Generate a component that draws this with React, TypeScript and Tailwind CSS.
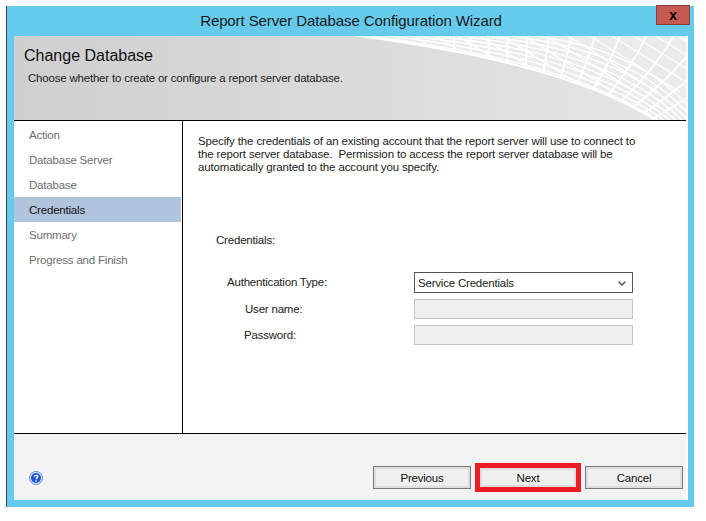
const font = "font-['Liberation_Sans',sans-serif]";
const small = 'text-[11.5px] tracking-[-0.2px]';

const steps = ['Action', 'Database Server', 'Database', 'Credentials', 'Summary', 'Progress and Finish'];

function HeaderMesh() {
  const edge = 'M340 0 C440 14 560 35 640 84 L672 84 L672 0 Z';
  const arcs = [0, 1, 2, 3, 4, 5, 6, 7];
  const spokes = [0, 1, 2, 3, 4, 5, 6, 7, 8, 9, 10, 11, 12, 13];
  return (
    <svg className="absolute inset-0" width="672" height="84" viewBox="0 0 672 84">
      <defs>
        <clipPath id="mesh">
          <path d={edge} />
        </clipPath>
      </defs>
      <path d={edge} fill="#ebebeb" />
      <g clipPath="url(#mesh)" fill="none" stroke="#ffffff" strokeWidth="1.5">
        {arcs.map((i) => (
          <path key={i} d={`M${340 + i * 12} ${-2 - i} C${440 + i * 14} ${11 - i * 2} ${560 + i * 10} ${30 - i * 3} ${644 + i * 6} 84`} />
        ))}
        {spokes.map((i) => {
          const top = 440 + i * (16 + i * 0.6);
          const lean = Math.max(0, top - 500) * 0.45;
          return <path key={i} d={`M${top} -2 Q${top - lean * 0.2} 30 ${top - lean} 84`} strokeWidth="1.8" />;
        })}
        {spokes.map((i) => (
          <path key={`d${i}`} d={`M${400 + i * 22} 0 L${490 + i * 22} 56`} strokeWidth="1.2" />
        ))}
        <path d="M340 0 C440 14 560 35 640 84" strokeWidth="4" />
      </g>
    </svg>
  );
}

function HelpIcon() {
  return (
    <svg width="14" height="14" viewBox="0 0 14 14">
      <circle cx="7" cy="7" r="6.5" fill="#dbe6f8" stroke="#5f8fdc" strokeWidth="1" />
      <circle cx="7" cy="7" r="5" fill="#1f55d0" />
      <path d="M5.2 5.6 C5.4 3.9 8.8 3.9 8.8 5.6 C8.8 6.9 7 6.8 7 8.2" fill="none" stroke="#ffffff" strokeWidth="1.3" />
      <rect x="6.3" y="9.2" width="1.4" height="1.4" fill="#ffffff" />
    </svg>
  );
}

function WizardButton({ label }: { label: string }) {
  return (
    <div className={`flex h-[23px] w-[98px] items-center justify-center border border-[#7a7a7a] bg-[#efefef] pt-[2px] text-[#111] shadow-[inset_0_0_0_2px_#dcdcdc] ${small}`}>
      {label}
    </div>
  );
}

export default function App() {
  return (
    <div className={`h-[521px] w-[706px] overflow-hidden bg-white pl-[6px] pt-[6px] ${font}`}>
      <div className="h-[501px] w-[688px] border-l border-[#444]">
        <div className="flex h-[501px] flex-col bg-[#65caeb] pb-[7px] pl-[7px] pr-[6px]">
          {/* Title bar */}
          <div className="relative flex h-[30px] shrink-0 items-center justify-center text-[15px] tracking-[-0.1px] text-[#1a1a1a]">
            Report Server Database Configuration Wizard
            <div className="absolute right-[-2px] top-[-1px] flex h-[20px] w-[34px] items-center justify-center border border-[#8a4038] bg-[#c65a52] text-sm font-bold text-black">
              x
            </div>
          </div>

          <div className="flex min-h-0 flex-1 flex-col bg-white">
            {/* Header */}
            <div className="relative mr-[2px] h-[85px] shrink-0 overflow-hidden border-b border-black bg-gradient-to-r from-[#cfcfcf] to-[#e6e6e6]">
              <HeaderMesh />
              <div className="relative pl-[10px] pt-[9px] text-base leading-[22px] text-[#111]">Change Database</div>
              <div className={`relative pl-[14px] pt-[3px] text-[#222] ${small}`}>
                Choose whether to create or configure a report server database.
              </div>
            </div>

            {/* Body */}
            <div className="flex min-h-0 flex-1">
              <div className="w-[169px] shrink-0 border-r border-black pt-[1px]">
                {steps.map((step) => (
                  <div
                    key={step}
                    className={`mr-[1px] flex h-[25px] items-center pl-[15px] pt-[2px] ${small} ${
                      step === 'Credentials' ? 'bg-[#b0c4de] text-[#111]' : 'text-[#6d6d6d]'
                    }`}
                  >
                    {step}
                  </div>
                ))}
              </div>
              <div className={`flex-1 pl-[15px] pt-[14px] text-[#222] ${small}`}>
                <p className="w-[445px] leading-[13px] tracking-[-0.14px]">
                  Specify the credentials of an existing account that the report server will use to connect to the
                  report server database.&nbsp; Permission to access the report server database will be automatically
                  granted to the account you specify.
                </p>
                <div className="pl-[18px] pt-[58px]">Credentials:</div>
                <div className="mt-[23px] grid grid-cols-[216px_219px] gap-y-[6px]">
                  <div className="flex h-[21px] items-center pl-[29px]">Authentication Type:</div>
                  <div className="flex h-[21px] items-center justify-between border border-[#555] bg-white pl-[3px] pr-[6px] pt-[1px]">
                    Service Credentials
                    <svg width="8" height="5" viewBox="0 0 8 5">
                      <path d="M0.7 0.7 L4 4 L7.3 0.7" fill="none" stroke="#555" strokeWidth="1.5" />
                    </svg>
                  </div>
                  <div className="flex h-[20px] items-center pl-[47px]">User name:</div>
                  <div className="h-[20px] border border-[#c4c4c4] bg-[#efefef]" />
                  <div className="flex h-[20px] items-center pl-[46px]">Password:</div>
                  <div className="h-[20px] border border-[#c4c4c4] bg-[#efefef]" />
                </div>
              </div>
            </div>

            {/* Footer */}
            <div className="mr-[2px] flex h-[67px] shrink-0 items-start border-t border-black bg-[#f3f3f3] pl-[15px] pt-[29px]">
              <div className="mt-[8px]">
                <HelpIcon />
              </div>
              <div className="ml-auto mr-[3px] flex items-center gap-[4px]">
                <WizardButton label="Previous" />
                <div className={`flex h-[29px] w-[106px] items-center justify-center border-[5px] border-[#ed1c24] bg-[#efefef] pt-[2px] text-[#111] shadow-[inset_0_0_0_2px_#dcdcdc] ${small}`}>
                  Next
                </div>
                <WizardButton label="Cancel" />
              </div>
            </div>
          </div>
        </div>
      </div>
    </div>
  );
}
